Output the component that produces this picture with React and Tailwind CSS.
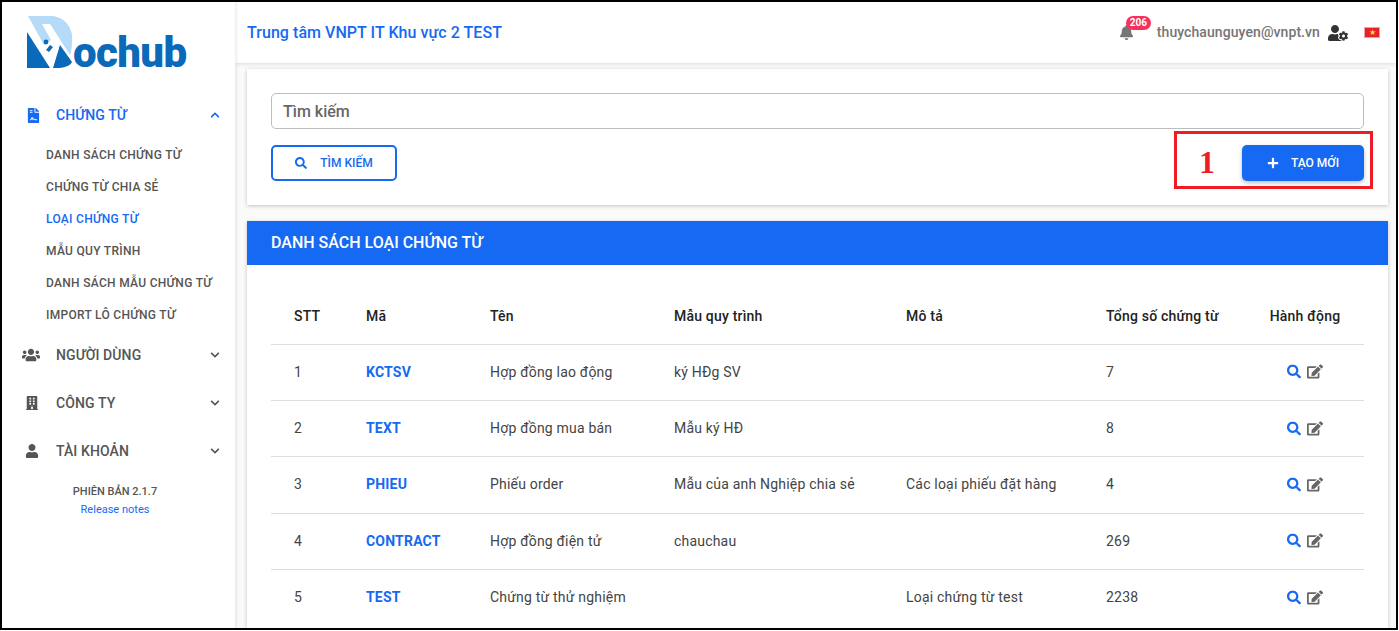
import React from 'react';
import {
  FaBell, FaBuilding, FaChevronDown, FaChevronUp, FaEdit, FaFileContract, FaPlus,
  FaSearch, FaUser, FaUserCog, FaUsers,
} from 'react-icons/fa';

const SUB_MENU = [
  'DANH SÁCH CHỨNG TỪ',
  'CHỨNG TỪ CHIA SẺ',
  'LOẠI CHỨNG TỪ',
  'MẪU QUY TRÌNH',
  'DANH SÁCH MẪU CHỨNG TỪ',
  'IMPORT LÔ CHỨNG TỪ',
];

const ROWS = [
  ['1', 'KCTSV', 'Hợp đồng lao động', 'ký HĐg SV', '', '7'],
  ['2', 'TEXT', 'Hợp đồng mua bán', 'Mẫu ký HĐ', '', '8'],
  ['3', 'PHIEU', 'Phiếu order', 'Mẫu của anh Nghiệp chia sẻ', 'Các loại phiếu đặt hàng', '4'],
  ['4', 'CONTRACT', 'Hợp đồng điện tử', 'chauchau', '', '269'],
  ['5', 'TEST', 'Chứng từ thử nghiệm', '', 'Loại chứng từ test', '2238'],
];

function Logo() {
  return (
    <div className="flex items-end h-[53px] w-[165px]">
      <svg width="48" height="53" viewBox="0 0 48 53" className="shrink-0">
        <path d="M2 0 H26 C40 1 48 14 46 26 C46 32 45 36 44 39 L24 8 H16 L25 24 L18 29 Z" fill="#b5dbf8" />
        <path d="M1 16 L24 52 H1 Z" fill="#0a69b9" />
        <path d="M27 52 L34 29 L46 46 C44 50 38 52 30 52 Z" fill="#0a69b9" />
        <path d="M24 29 L20 34 L23 36 L27 31 Z" fill="#0a69b9" />
        <circle cx="20" cy="26" r="2.4" fill="#0a69b9" />
      </svg>
      <span className="font-['Roboto',sans-serif] font-black text-[42px] leading-[32px] text-[#0a69b9] tracking-[-0.6px] -ml-[1px]">
        ochub
      </span>
    </div>
  );
}

function MenuItem({ icon, label, open, active }) {
  return (
    <div className={`flex items-center h-[48px] pl-5 pr-[15px] ${active ? 'text-[#1569f2]' : 'text-[#555555]'}`}>
      <div className="w-[34px] flex justify-start pl-[1px]">{icon}</div>
      <span className="flex-1 text-[14px] font-medium tracking-[0.1px]">{label}</span>
      {open ? <FaChevronUp size={10} /> : <FaChevronDown size={10} />}
    </div>
  );
}

function Sidebar() {
  return (
    <aside className="w-[233px] shrink-0 bg-white shadow-[1px_0_4px_rgba(0,0,0,0.1)] z-10">
      <div className="h-[89px] pt-[14px] pl-[24px]">
        <Logo />
      </div>
      <MenuItem active open label="CHỨNG TỪ" icon={<FaFileContract size={15} className="ml-[3px]" />} />
      <ul>
        {SUB_MENU.map((item) => (
          <li
            key={item}
            className={`h-[32px] flex items-center pl-[44px] text-[12px] font-medium tracking-[0.3px] ${item === 'LOẠI CHỨNG TỪ' ? 'text-[#1569f2]' : 'text-[#555555]'}`}
          >
            {item}
          </li>
        ))}
      </ul>
      <MenuItem label="NGƯỜI DÙNG" icon={<FaUsers size={18} className="-ml-[1px]" />} />
      <MenuItem label="CÔNG TY" icon={<FaBuilding size={14} className="ml-[2px]" />} />
      <MenuItem label="TÀI KHOẢN" icon={<FaUser size={14} className="ml-[2px]" />} />
      <div className="text-center mt-[8px] pr-[7px]">
        <div className="text-[11px] font-medium leading-[18px] text-[#555555]">PHIÊN BẢN 2.1.7</div>
        <div className="text-[11px] leading-[18px] text-[#1569f2]">Release notes</div>
      </div>
    </aside>
  );
}

function Header() {
  return (
    <header className="h-[61px] shrink-0 bg-white flex items-center pl-[12px] pr-[16px] shadow-[0_1px_4px_rgba(0,0,0,0.12)] relative">
      <h1 className="text-[16px] font-medium tracking-[0.05px] text-[#1569f2] flex-1">Trung tâm VNPT IT Khu vực 2 TEST</h1>
      <div className="relative mr-[23px] text-[#757575]">
        <FaBell size={15} />
        <span className="absolute -top-[9px] left-[7px] h-[14px] px-[4px] rounded-full bg-[#f5325c] text-white text-[10px] font-bold leading-[14px]">206</span>
      </div>
      <span className="text-[14px] font-medium tracking-[0.08px] text-[#757575]">thuychaunguyen@vnpt.vn</span>
      <FaUserCog size={20} className="ml-[8px] text-[#333333]" />
      <div className="ml-[16px] w-[16px] h-[11px] bg-[#e8202a] border border-[#f0a0a0] flex items-center justify-center text-[#ffd83a] text-[8px] leading-none">★</div>
    </header>
  );
}

function SearchCard() {
  return (
    <section className="bg-white ml-[12px] mr-[8px] mt-[6px] h-[136px] pt-[24px] px-[24px] shadow-[0_1px_4px_rgba(0,0,0,0.22)]">
      <div className="h-[36px] border border-[#bdbdbd] rounded-[5px] flex items-center pl-[11px] pt-[1px] text-[16px] font-medium text-[#666666]">
        Tìm kiếm
      </div>
      <div className="flex items-center justify-between mt-[16px]">
        <button className="w-[126px] h-[36px] border-2 border-[#1569f2] rounded-[5px] flex items-center justify-center gap-[13px] text-[#1569f2] text-[12px] font-medium">
          <FaSearch size={12} />
          TÌM KIẾM
        </button>
        <div className="relative">
          <span className="absolute -left-[68px] -top-[14px] w-[199px] h-[58px] border-[3px] border-[#ee1c25]" />
          <span className="absolute -left-[43px] -top-[1px] h-[36px] leading-[36px] font-['Liberation_Serif',serif] font-bold text-[32px] text-[#ee1c25]">1</span>
          <button className="relative w-[122px] h-[36px] bg-[#1569f2] rounded-[5px] flex items-center justify-center gap-[12px] text-white text-[12px] font-medium shadow-[0_2px_4px_rgba(0,0,0,0.25)]">
            <FaPlus size={12} />
            TẠO MỚI
          </button>
        </div>
      </div>
    </section>
  );
}

function ListCard() {
  return (
    <section className="bg-white ml-[12px] mr-[8px] mt-[16px] flex-1 overflow-hidden shadow-[0_1px_4px_rgba(0,0,0,0.22)]">
      <div className="h-[44px] bg-[#1569f2] flex items-center pl-[24px] text-white text-[16px] font-medium">
        DANH SÁCH LOẠI CHỨNG TỪ
      </div>
      <div className="px-[24px] pt-[23px]">
        <table className="w-full table-fixed text-[14px] tracking-[0.2px]">
          <colgroup>
            <col className="w-[95px]" />
            <col className="w-[124px]" />
            <col className="w-[184px]" />
            <col className="w-[232px]" />
            <col className="w-[200px]" />
            <col className="w-[158px]" />
            <col />
          </colgroup>
          <thead>
            <tr className="h-[56px] border-b border-[#dedede] text-left text-[#222222]">
              <th className="font-medium pl-[23px] pt-[2px]">STT</th>
              <th className="font-medium pt-[2px]">Mã</th>
              <th className="font-medium pt-[2px]">Tên</th>
              <th className="font-medium pt-[2px]">Mẫu quy trình</th>
              <th className="font-medium pt-[2px]">Mô tả</th>
              <th className="font-medium pt-[2px]">Tổng số chứng từ</th>
              <th className="font-medium text-center pr-[18px] pt-[2px]">Hành động</th>
            </tr>
          </thead>
          <tbody>
            {ROWS.map((row) => (
              <tr key={row[0]} className="h-[56.4px] border-b border-[#dedede] last:border-b-transparent text-[#444444]">
                <td className="pl-[23px]">{row[0]}</td>
                <td className="font-bold text-[#1569f2]">{row[1]}</td>
                <td>{row[2]}</td>
                <td>{row[3]}</td>
                <td>{row[4]}</td>
                <td>{row[5]}</td>
                <td className="pr-[18px]">
                  <div className="flex items-center justify-center gap-[6px] -translate-y-[0.5px]">
                    <FaSearch size={14} className="text-[#1569f2]" />
                    <FaEdit size={16} className="text-[#666666]" />
                  </div>
                </td>
              </tr>
            ))}
          </tbody>
        </table>
      </div>
    </section>
  );
}

export default function App() {
  return (
    <div className="h-[631px] w-[1399px] overflow-hidden bg-white font-['Roboto',sans-serif]">
      <div className="w-[1398px] h-[630px] border-2 border-black flex overflow-hidden bg-[#fafafa]">
        <Sidebar />
        <main className="flex-1 min-w-0 flex flex-col">
          <Header />
          <SearchCard />
          <ListCard />
        </main>
      </div>
    </div>
  );
}
